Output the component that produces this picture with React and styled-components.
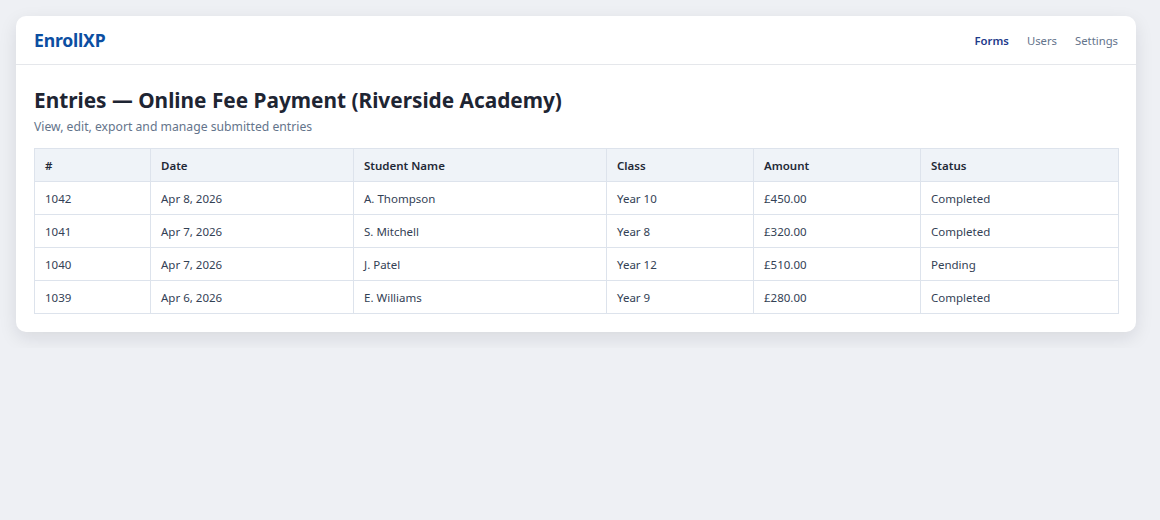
import React from "react";
import styled, { createGlobalStyle } from "styled-components";

const GlobalStyle = createGlobalStyle`
  html, body {
    margin: 0;
    padding: 0;
    background: #eef0f4;
    font-family: "Noto Sans", "Open Sans", sans-serif;
  }
`;

const Page = styled.div`
  padding: 16px 24px 16px 16px;
`;

const Card = styled.div`
  background: #ffffff;
  border-radius: 10px;
  box-shadow: 0 6px 18px rgba(15, 23, 42, 0.1);
  overflow: hidden;
`;

const Header = styled.header`
  height: 48px;
  display: flex;
  align-items: center;
  justify-content: space-between;
  padding: 0 18px;
  border-bottom: 1px solid #e5e7eb;
`;

const Brand = styled.div`
  font-size: 17.6px;
  font-weight: 700;
  color: #0b4ea2;
  letter-spacing: -0.2px;
`;

const Nav = styled.nav`
  display: flex;
  gap: 18px;
`;

const NavLink = styled.a`
  font-size: 11.3px;
  color: ${(p) => (p.$active ? "#1e3a8a" : "#64748b")};
  font-weight: ${(p) => (p.$active ? 600 : 400)};
  text-decoration: none;
  cursor: pointer;
`;

const Body = styled.section`
  padding: 21px 18px 18px;
`;

const Title = styled.h1`
  margin: 0;
  font-size: 20.8px;
  line-height: 28px;
  font-weight: 700;
  color: #1e2533;
`;

const Subtitle = styled.p`
  margin: 4px 0 12px;
  font-size: 12.2px;
  line-height: 18px;
  color: #64748b;
`;

const Table = styled.table`
  width: 100%;
  border-collapse: collapse;
  table-layout: fixed;
  font-size: 11.5px;
`;

const Th = styled.th`
  text-align: left;
  font-weight: 600;
  color: #1f2937;
  background: #eff3f8;
  height: 32px;
  padding: 0 10px;
  border: 1px solid #dde3ec;
`;

const Td = styled.td`
  color: #334155;
  height: 32px;
  padding: 0 10px;
  border: 1px solid #dde3ec;
`;

const columns = [
  { label: "#", width: 116 },
  { label: "Date", width: 203 },
  { label: "Student Name", width: 253 },
  { label: "Class", width: 147 },
  { label: "Amount", width: 167 },
  { label: "Status", width: 198 },
];

const entries = [
  ["1042", "Apr 8, 2026", "A. Thompson", "Year 10", "£450.00", "Completed"],
  ["1041", "Apr 7, 2026", "S. Mitchell", "Year 8", "£320.00", "Completed"],
  ["1040", "Apr 7, 2026", "J. Patel", "Year 12", "£510.00", "Pending"],
  ["1039", "Apr 6, 2026", "E. Williams", "Year 9", "£280.00", "Completed"],
];

export default function App() {
  return (
    <>
      <GlobalStyle />
      <Page>
        <Card>
          <Header>
            <Brand>EnrollXP</Brand>
            <Nav>
              <NavLink $active>Forms</NavLink>
              <NavLink>Users</NavLink>
              <NavLink>Settings</NavLink>
            </Nav>
          </Header>
          <Body>
            <Title>Entries — Online Fee Payment (Riverside Academy)</Title>
            <Subtitle>View, edit, export and manage submitted entries</Subtitle>
            <Table>
              <colgroup>
                {columns.map((c) => (
                  <col key={c.label} style={{ width: c.width }} />
                ))}
              </colgroup>
              <thead>
                <tr>
                  {columns.map((c) => (
                    <Th key={c.label}>{c.label}</Th>
                  ))}
                </tr>
              </thead>
              <tbody>
                {entries.map((row) => (
                  <tr key={row[0]}>
                    {row.map((cell, i) => (
                      <Td key={i}>{cell}</Td>
                    ))}
                  </tr>
                ))}
              </tbody>
            </Table>
          </Body>
        </Card>
      </Page>
    </>
  );
}
